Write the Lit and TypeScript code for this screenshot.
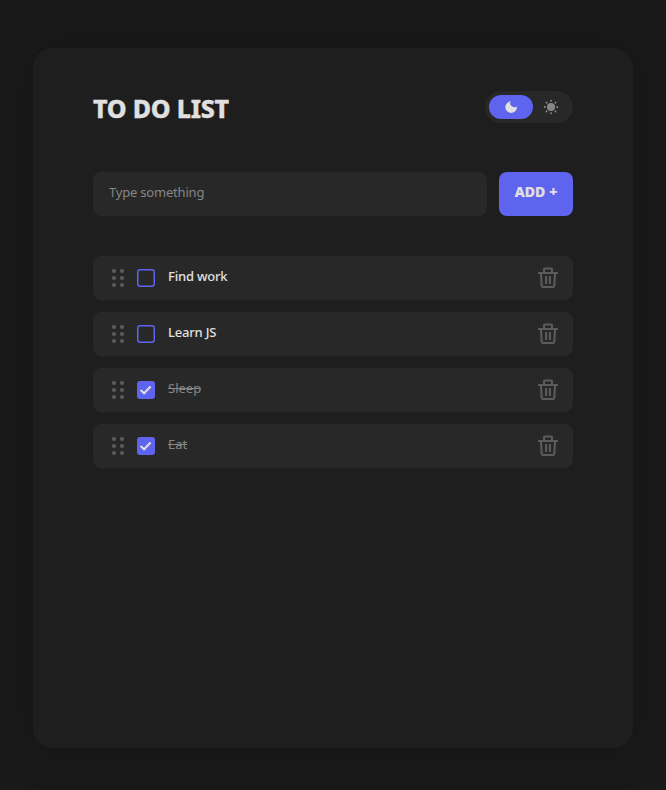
import { LitElement, html, css, svg } from "lit";
import { customElement, state } from "lit/decorators.js";
import { classMap } from "lit/directives/class-map.js";

interface Task {
  name: string;
  done: boolean;
}

const rayAngles = [0, 45, 90, 135, 180, 225, 270, 315];

@customElement("app-root")
export class AppRoot extends LitElement {
  static styles = css`
    :host {
      display: block;
      box-sizing: border-box;
      height: 790px;
      padding: 48px 33px 42px;
      overflow: hidden;
      background: #191919;
      color: #e0e0e0;
      font-family: "Noto Sans", "Open Sans", sans-serif;
    }
    * { box-sizing: border-box; }
    svg { display: block; flex: none; }
    .card {
      width: 600px;
      height: 700px;
      padding: 43px 60px;
      border-radius: 20px;
      background: #1e1e1e;
      box-shadow: 0 0 50px rgba(0, 0, 0, 0.15);
    }
    header {
      display: flex;
      justify-content: space-between;
      height: 32px;
    }
    h1 {
      margin: 0;
      font-size: 25px;
      line-height: 34px;
      font-weight: 800;
      letter-spacing: -0.25px;
      white-space: nowrap;
      -webkit-text-stroke: 0.3px #e0e0e0;
    }
    .theme {
      display: flex;
      width: 88px;
      height: 32px;
      padding: 4px;
      border-radius: 16px;
      background: #282828;
    }
    .mode {
      display: flex;
      align-items: center;
      justify-content: center;
      width: 44px;
      height: 24px;
      border-radius: 12px;
    }
    .mode.on { background: #5e64ee; }
    .mode.sun { width: 36px; }
    .entry {
      display: flex;
      gap: 12px;
      margin-top: 49px;
    }
    input {
      flex: 1;
      min-width: 0;
      height: 44px;
      padding: 0 16px 4px;
      border: 0;
      border-radius: 8px;
      outline: 0;
      background: #282828;
      color: #e0e0e0;
      font: 13px "Noto Sans", sans-serif;
      letter-spacing: -0.2px;
    }
    input::placeholder { color: #868686; opacity: 1; }
    .add {
      width: 74px;
      height: 44px;
      padding: 0 0 5px;
      border: 0;
      border-radius: 8px;
      background: #5e64ee;
      color: #e0e0e0;
      font: 800 14px "Noto Sans", sans-serif;
      letter-spacing: 0.1px;
      white-space: nowrap;
      -webkit-text-stroke: 0.2px #e0e0e0;
    }
    ul {
      display: grid;
      gap: 12px;
      margin: 40px 0 0;
      padding: 0;
      list-style: none;
    }
    li {
      display: flex;
      align-items: center;
      height: 44px;
      padding: 0 13px 0 18px;
      border-radius: 8px;
      background: #282828;
    }
    .check { margin-left: 12px; }
    .label {
      flex: 1;
      padding: 0 0 5px 13px;
      font-size: 13px;
      line-height: 20px;
      font-weight: 500;
      letter-spacing: -0.2px;
    }
    .done {
      color: #868686;
      font-weight: 400;
      letter-spacing: 0;
      text-decoration: line-through;
    }
  `;

  @state() private tasks: Task[] = [
    { name: "Find work", done: false },
    { name: "Learn JS", done: false },
    { name: "Sleep", done: true },
    { name: "Eat", done: true },
  ];

  private toggle(index: number) {
    this.tasks = this.tasks.map((t, i) => (i === index ? { ...t, done: !t.done } : t));
  }

  private remove(index: number) {
    this.tasks = this.tasks.filter((_, i) => i !== index);
  }

  private add() {
    const field = this.renderRoot.querySelector("input")!;
    const name = field.value.trim();
    if (name) this.tasks = [{ name, done: false }, ...this.tasks];
    field.value = "";
  }

  private grip() {
    return html`<svg width="14" height="20" viewBox="0 0 14 20" fill="#5c5c5c">
      ${[3, 10, 17].map((y) => svg`<circle cx="3" cy=${y} r="2.1"/><circle cx="11" cy=${y} r="2.1"/>`)}
    </svg>`;
  }

  private box(done: boolean) {
    return done
      ? html`<svg width="18" height="18" viewBox="0 0 18 18">
          <rect width="18" height="18" rx="3" fill="#5e64ee"/>
          <path d="M3.6 9 7.1 12.3 13.6 5.5" fill="none" stroke="#e0e0e0" stroke-width="2.1"/>
        </svg>`
      : html`<svg width="18" height="18" viewBox="0 0 18 18">
          <rect x=".75" y=".75" width="16.5" height="16.5" rx="2.4" fill="none" stroke="#5e64ee" stroke-width="1.5"/>
        </svg>`;
  }

  private trash() {
    return html`<svg width="24" height="24" viewBox="0 0 24 24" fill="none" stroke="#5c5c5c" stroke-width="2" stroke-linejoin="round">
      <path d="M2 7H22M8 7V3.6Q8 2.6 9 2.6H15Q16 2.6 16 3.6V7M4.9 7 5.7 20Q5.8 20.9 6.7 20.9H17.3Q18.2 20.9 18.3 20L19.1 7M10.1 10V18M13.9 10V18"/>
    </svg>`;
  }

  render() {
    return html`<main class="card">
      <header>
        <h1>TO DO LIST</h1>
        <div class="theme">
          <div class="mode on">
            <svg width="13" height="12" viewBox="0 0 13 12"><path d="M5.6.3A3.6 3.6 0 0 0 7.2 5.4 4.4 4.4 0 0 0 11.9 5.4 5.8 5.8 0 1 1 5.6.3Z" fill="#e0e0e0"/></svg>
          </div>
          <div class="mode sun">
            <svg width="16" height="16" viewBox="0 0 16 16" fill="#868686">
              <circle cx="8" cy="8" r="4.1"/>
              ${rayAngles.map((a) => svg`<rect x="7.1" y=".8" width="1.8" height="1.9" rx=".7" transform="rotate(${a} 8 8)"/>`)}
            </svg>
          </div>
        </div>
      </header>
      <div class="entry">
        <input placeholder="Type something" />
        <button class="add" @click=${this.add}>ADD +</button>
      </div>
      <ul>
        ${this.tasks.map(
          (t, i) => html`<li>
            ${this.grip()}
            <div class="check" @click=${() => this.toggle(i)}>${this.box(t.done)}</div>
            <div class="label"><span class=${classMap({ done: t.done })}>${t.name}</span></div>
            <div @click=${() => this.remove(i)}>${this.trash()}</div>
          </li>`
        )}
      </ul>
    </main>`;
  }
}
